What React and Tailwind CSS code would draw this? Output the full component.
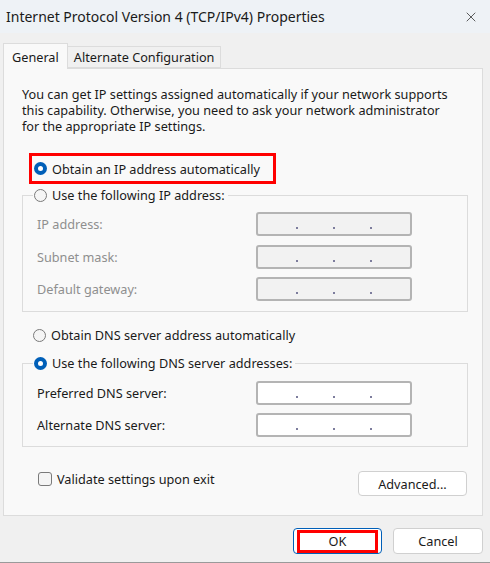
import { X } from "lucide-react";

const FONT = { fontFamily: '"Segoe UI", "Noto Sans", sans-serif' };

function Radio({ checked }) {
  return checked ? (
    <span className="w-[13px] h-[13px] rounded-full bg-[#005fb8] flex items-center justify-center shrink-0">
      <span className="w-[5px] h-[5px] rounded-full bg-white" />
    </span>
  ) : (
    <span className="w-[13px] h-[13px] rounded-full border border-[#7a7a7a] bg-[#f5f5f5] shrink-0" />
  );
}

function IpField({ disabled }) {
  return (
    <div className={`w-[156px] h-[24px] rounded-[3px] border-2 border-[#b4b4b4] flex items-end pb-[5px] ${disabled ? "bg-[#f2f2f2]" : "bg-white"}`}>
      <div className="flex w-full pl-[38px] gap-[35px]">
        <span className="w-[2px] h-[2px] bg-[#7d7d9d]" />
        <span className="w-[2px] h-[2px] bg-[#7d7d9d]" />
        <span className="w-[2px] h-[2px] bg-[#7d7d9d]" />
      </div>
    </div>
  );
}

function FieldRow({ label, disabled, className = "" }) {
  return (
    <div className={`flex items-center h-[24px] ${className}`}>
      <span className={`w-[233px] pl-[14px] ${disabled ? "text-[#8f8f8f]" : "text-[#1a1a1a]"}`}>{label}</span>
      <IpField disabled={disabled} />
    </div>
  );
}

export default function App() {
  return (
    <div className="w-[490px] h-[563px] bg-[#f0f0f0] flex flex-col border-b border-[#9a9a9a] text-[12.7px] leading-[16px] text-[#1a1a1a] overflow-hidden" style={FONT}>
      <div className="h-[33px] shrink-0 bg-[#eef2f6] flex items-center justify-between pl-[6px] pr-[11px]">
        <span className="text-[14px] leading-[20px] text-[#1a1a1a]">Internet Protocol Version 4 (TCP/IPv4) Properties</span>
        <X size={16} strokeWidth={1.2} className="text-[#333]" />
      </div>

      <div className="flex items-end mt-[9px] ml-[3px] h-[26px]">
        <div className="h-[26px] px-[8px] pt-[5px] bg-[#f9f9f9] border border-b-0 border-[#dcdcdc] relative top-[1px] z-10">General</div>
        <div className="h-[22px] px-[6px] flex items-center bg-[#f0f0f0] border border-l-0 border-[#dcdcdc]">Alternate Configuration</div>
      </div>

      <div className="ml-[3px] w-[480px] h-[448px] bg-[#f9f9f9] border border-[#dcdcdc] pl-[18px] pt-[17px] flex flex-col">
        <p className="leading-[16px] w-[436px]">
          You can get IP settings assigned automatically if your network supports this capability. Otherwise, you need to ask your network administrator for the appropriate IP settings.
        </p>

        <div className="mt-[19px] ml-[7px] w-[247px] h-[31px] border-[3px] border-[#ff0000] flex items-center gap-[5px] pl-[2px]">
          <Radio checked />
          <span>Obtain an IP address automatically</span>
        </div>

        <fieldset className="mt-[3px] w-[446px] border border-[#dcdcdc] pb-[10px]">
          <legend className="ml-[10px] px-[1px] h-[16px] flex items-center gap-[5px]">
            <Radio />
            <span className="pr-[2px]">Use the following IP address:</span>
          </legend>
          <FieldRow label="IP address:" disabled className="mt-[9px]" />
          <FieldRow label="Subnet mask:" disabled className="mt-[9px]" />
          <FieldRow label="Default gateway:" disabled className="mt-[8px]" />
        </fieldset>

        <div className="mt-[15px] ml-[11px] h-[16px] flex items-center gap-[5px]">
          <Radio />
          <span>Obtain DNS server address automatically</span>
        </div>

        <fieldset className="mt-[12px] w-[446px] border border-[#dcdcdc] pb-[9px]">
          <legend className="ml-[10px] px-[1px] h-[16px] flex items-center gap-[5px]">
            <Radio checked />
            <span className="pr-[2px]">Use the following DNS server addresses:</span>
          </legend>
          <FieldRow label="Preferred DNS server:" className="mt-[10px]" />
          <FieldRow label="Alternate DNS server:" className="mt-[8px]" />
        </fieldset>

        <div className="mt-[24px] flex items-start justify-between pr-[15px]">
          <div className="flex items-center gap-[5px] ml-[16px]">
            <span className="w-[14px] h-[14px] rounded-[3px] border border-[#7a7a7a] bg-[#f5f5f5]" />
            <span>Validate settings upon exit</span>
          </div>
          <button className="w-[109px] h-[25px] rounded-[4px] border border-[#d0d0d0] bg-white">Advanced...</button>
        </div>
      </div>

      <div className="mt-[12px] flex justify-end gap-[11px] pr-[7px]">
        <button className="relative w-[89px] h-[26px] rounded-[4px] border border-[#005fb8] bg-white">
          <span className="absolute left-[3px] right-[3px] top-[1px] bottom-[0px] border-[3px] border-[#ff0000]" />
          OK
        </button>
        <button className="w-[90px] h-[26px] rounded-[4px] border border-[#d0d0d0] bg-white">Cancel</button>
      </div>
    </div>
  );
}
